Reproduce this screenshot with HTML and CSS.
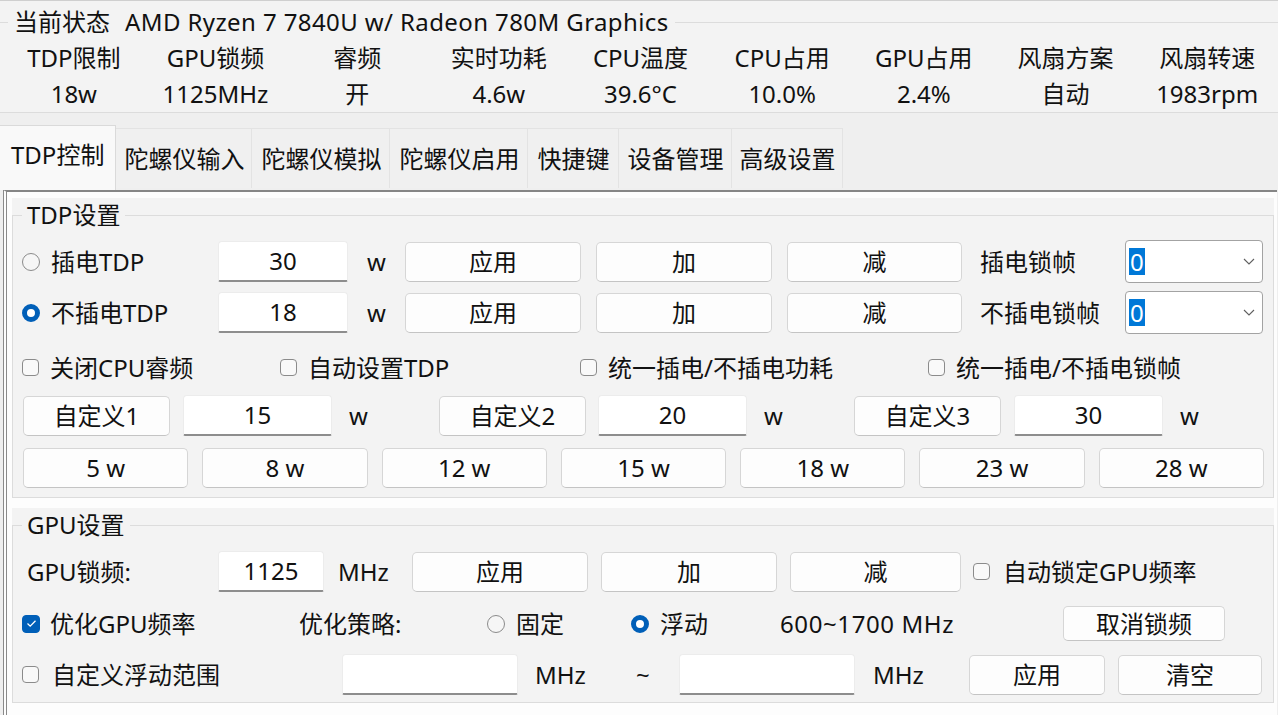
FILE: index.html
```html
<!DOCTYPE html>
<html lang="zh-CN">
<head>
<meta charset="utf-8">
<title>TDP控制</title>
<link rel="stylesheet" href="styles.css">
</head>
<body>
<header class="status">
  <fieldset class="status-box">
    <legend class="status-title">当前状态<span class="cpu-name">AMD Ryzen 7 7840U w/ Radeon 780M Graphics</span></legend>
    <div class="stats">
      <div class="stat"><div class="stat-line">TDP限制</div><div class="stat-line">18w</div></div>
      <div class="stat"><div class="stat-line">GPU锁频</div><div class="stat-line">1125MHz</div></div>
      <div class="stat"><div class="stat-line">睿频</div><div class="stat-line">开</div></div>
      <div class="stat"><div class="stat-line">实时功耗</div><div class="stat-line">4.6w</div></div>
      <div class="stat"><div class="stat-line">CPU温度</div><div class="stat-line">39.6°C</div></div>
      <div class="stat"><div class="stat-line">CPU占用</div><div class="stat-line">10.0%</div></div>
      <div class="stat"><div class="stat-line">GPU占用</div><div class="stat-line">2.4%</div></div>
      <div class="stat"><div class="stat-line">风扇方案</div><div class="stat-line">自动</div></div>
      <div class="stat"><div class="stat-line">风扇转速</div><div class="stat-line">1983rpm</div></div>
    </div>
  </fieldset>
</header>

<nav class="tabs">
  <div class="tab tab-active">TDP控制</div>
  <div class="tab">陀螺仪输入</div>
  <div class="tab tab-wide">陀螺仪模拟</div>
  <div class="tab tab-wide">陀螺仪启用</div>
  <div class="tab tab-short">快捷键</div>
  <div class="tab tab-dev">设备管理</div>
  <div class="tab tab-adv">高级设置</div>
</nav>

<main class="panel">
  <section class="group group-tdp">
    <fieldset class="group-box">
      <legend class="group-title">TDP设置</legend>

      <div class="row row-t1">
        <div class="opt opt-radio cell-196"><span class="radio"></span><span>插电TDP</span></div>
        <div class="field field-130">30</div>
        <div class="unit unit-57">w</div>
        <div class="btn btn-176">应用</div>
        <div class="btn btn-176 gap-15">加</div>
        <div class="btn btn-175 gap-15">减</div>
        <div class="cell cell-fps">插电锁帧</div>
        <div class="combo"><span class="combo-sel">0</span><svg class="chev" width="12" height="7" viewBox="0 0 12 7"><polyline points="1,1 6,6 11,1" fill="none" stroke="#5f5f5f" stroke-width="1.1"/></svg></div>
      </div>

      <div class="row row-t2">
        <div class="opt opt-radio cell-196"><span class="radio radio-on"></span><span>不插电TDP</span></div>
        <div class="field field-130">18</div>
        <div class="unit unit-57">w</div>
        <div class="btn btn-176">应用</div>
        <div class="btn btn-176 gap-15">加</div>
        <div class="btn btn-175 gap-15">减</div>
        <div class="cell cell-fps">不插电锁帧</div>
        <div class="combo"><span class="combo-sel">0</span><svg class="chev" width="12" height="7" viewBox="0 0 12 7"><polyline points="1,1 6,6 11,1" fill="none" stroke="#5f5f5f" stroke-width="1.1"/></svg></div>
      </div>

      <div class="row row-t3">
        <div class="opt cell-258"><span class="check"></span><span>关闭CPU睿频</span></div>
        <div class="opt cell-300"><span class="check"></span><span>自动设置TDP</span></div>
        <div class="opt cell-348"><span class="check"></span><span>统一插电/不插电功耗</span></div>
        <div class="opt"><span class="check"></span><span>统一插电/不插电锁帧</span></div>
      </div>

      <div class="row row-t4">
        <div class="btn btn-147">自定义1</div>
        <div class="field field-149 gap-13">15</div>
        <div class="unit unit-107">w</div>
        <div class="btn btn-147">自定义2</div>
        <div class="field field-149 gap-12">20</div>
        <div class="unit unit-107">w</div>
        <div class="btn btn-147">自定义3</div>
        <div class="field field-149 gap-13">30</div>
        <div class="unit unit-107">w</div>
      </div>

      <div class="row row-t5">
        <div class="btn btn-flex">5 w</div>
        <div class="btn btn-flex">8 w</div>
        <div class="btn btn-flex">12 w</div>
        <div class="btn btn-flex">15 w</div>
        <div class="btn btn-flex">18 w</div>
        <div class="btn btn-flex">23 w</div>
        <div class="btn btn-flex">28 w</div>
      </div>
    </fieldset>
  </section>

  <section class="group group-gpu">
    <fieldset class="group-box">
      <legend class="group-title">GPU设置</legend>

      <div class="row row-g1">
        <div class="cell cell-196 cell-gpu">GPU锁频:</div>
        <div class="field field-106">1125</div>
        <div class="unit unit-88">MHz</div>
        <div class="btn btn-176">应用</div>
        <div class="btn btn-176 gap-13">加</div>
        <div class="btn btn-171 gap-13">减</div>
        <div class="opt opt-wide gap-12"><span class="check"></span><span>自动锁定GPU频率</span></div>
      </div>

      <div class="row row-g2">
        <div class="opt opt-tight cell-277"><span class="check check-on"><svg width="11" height="9" viewBox="0 0 11 9"><polyline points="1.5,4.5 4.2,7.2 9.5,1.8" fill="none" stroke="#fff" stroke-width="1.3"/></svg></span><span>优化GPU频率</span></div>
        <div class="cell cell-188">优化策略:</div>
        <div class="opt opt-radio cell-144"><span class="radio"></span><span>固定</span></div>
        <div class="opt opt-radio cell-149"><span class="radio radio-on"></span><span>浮动</span></div>
        <div class="cell cell-283 range">600~1700 MHz</div>
        <div class="btn btn-162">取消锁频</div>
      </div>

      <div class="row row-g3">
        <div class="opt opt-wide cell-320"><span class="check"></span><span>自定义浮动范围</span></div>
        <div class="field field-176"></div>
        <div class="unit unit-118">MHz</div>
        <div class="cell cell-43">~</div>
        <div class="field field-176"></div>
        <div class="unit unit-114">MHz</div>
        <div class="btn btn-136">应用</div>
        <div class="btn btn-144 gap-13">清空</div>
      </div>
    </fieldset>
  </section>
</main>
</body>
</html>
```

FILE: styles.css
```css
* { box-sizing: border-box; }

html, body { margin: 0; padding: 0; }

body {
  width: 1278px;
  height: 715px;
  overflow: hidden;
  background: #efefef;
  font-family: "Noto Sans", "Noto Sans CJK SC", sans-serif;
  font-size: 24px;
  line-height: 1.3;
  color: #111;
}

/* ---------- status header ---------- */
.status {
  height: 113px;
  border-top: 1px solid #cfcfcf;
  background: #f3f3f3;
  padding-top: 6px;
}

.status-box {
  margin: 0 -1px;
  padding: 0;
  min-width: 0;
  height: 106px;
  border: 1px solid #dcdcdc;
}

.status-title {
  margin-left: 8px;
  padding: 0 6px;
  line-height: 30px;
  white-space: nowrap;
}

.cpu-name { margin-left: 15px; letter-spacing: 0.4px; }

.stats {
  display: grid;
  grid-template-columns: repeat(9, 1fr);
  padding: 3px 0 0 3px;
}

.stat { display: flex; flex-direction: column; align-items: center; }

.stat-line { line-height: 36px; white-space: nowrap; }

/* ---------- tabs ---------- */
.tabs {
  display: flex;
  align-items: flex-start;
  height: 77px;
}

.tab {
  margin-top: 15px;
  height: 60px;
  padding: 0 7px 0 8px;
  display: flex;
  align-items: center;
  background: #f0f0f0;
  border: 1px solid #e3e3e3;
  border-bottom: none;
  border-left: none;
  white-space: nowrap;
}

.tab-wide { padding: 0 8px 0 9px; }
.tab-short { padding: 0 9px; }
.tab-dev { padding: 0 8px; }
.tab-adv { padding: 0 7px; }

.tab-active {
  margin-top: 12px;
  height: 65px;
  padding: 0 11px 6px;
  background: #f9f9f9;
  border: 1px solid #dadada;
  border-bottom: none;
  border-left: none;
}

/* ---------- panel ---------- */
.panel {
  margin: 0 1px 0 3px;
  height: 525px;
  background: #fdfdfd;
  border-left: 4px double #8a8a8a;
  border-top: 2px solid #868686;
  padding: 6px 3px 0 5px;
}

.group { background: #f3f3f3; }
.group-tdp { height: 300px; }
.group-gpu { height: 195px; margin-top: 10px; }

.group-box {
  margin: 0;
  min-width: 0;
  height: 100%;
  padding: 0 9px;
  border: 1px solid #dcdcdc;
}

.group-title {
  margin-left: 0;
  padding: 0 5px;
  line-height: 34px;
}

/* ---------- rows ---------- */
.row {
  display: flex;
  align-items: center;
  height: 43px;
  white-space: nowrap;
}

.row-t1 { margin-top: 8px; }
.row-t2 { margin-top: 8px; }
.row-t3 { margin-top: 12px; }
.row-t4 { margin-top: 5px; padding-left: 1px; }
.row-t5 { margin-top: 9px; padding-left: 1px; gap: 14px; }
.row-g1 { margin-top: 8px; }
.row-g2 { margin-top: 9px; }
.row-g3 { margin-top: 8px; }

.row > * { flex-shrink: 0; }

/* ---------- cells ---------- */
.cell, .unit { display: flex; align-items: center; height: 100%; }

.cell-196 { width: 196px; }
.cell-gpu { padding-left: 5px; }
.cell-fps { width: 145px; margin-left: 18px; }
.cell-258 { width: 258px; }
.cell-300 { width: 300px; }
.cell-348 { width: 348px; }
.cell-277 { width: 277px; }
.cell-188 { width: 188px; }
.cell-144 { width: 144px; }
.cell-149 { width: 149px; }
.cell-283 { width: 283px; }
.cell-320 { width: 320px; }
.cell-43 { width: 43px; }

.range { letter-spacing: 0.6px; }

.unit-57 { width: 57px; justify-content: center; }
.unit-107 { width: 107px; padding-left: 17px; }
.unit-88 { width: 88px; padding-left: 14px; }
.unit-118 { width: 118px; padding-left: 17px; }
.unit-114 { width: 114px; padding-left: 18px; }

.gap-12 { margin-left: 12px; }
.gap-13 { margin-left: 13px; }
.gap-15 { margin-left: 15px; }

/* ---------- buttons ---------- */
.btn {
  height: 40px;
  display: flex;
  align-items: center;
  justify-content: center;
  background: #fdfdfd;
  border: 1px solid #d6d6d6;
  border-bottom-color: #c4c4c4;
  border-radius: 5px;
}

.btn-176 { width: 176px; }
.btn-175 { width: 175px; }
.btn-171 { width: 171px; }
.btn-147 { width: 147px; }
.btn-162 { width: 162px; height: 35px; }
.btn-136 { width: 136px; }
.btn-144 { width: 144px; }
.btn-flex { flex: 1 1 0; }

/* ---------- text fields ---------- */
.field {
  height: 41px;
  display: flex;
  align-items: center;
  justify-content: center;
  background: #fff;
  border: 1px solid #ececec;
  border-bottom: 2px solid #8d8d8d;
  border-radius: 4px 4px 2px 2px;
}

.field-130 { width: 130px; }
.field-149 { width: 149px; }
.field-106 { width: 106px; }
.field-176 { width: 176px; }

/* ---------- combo box ---------- */
.combo {
  width: 138px;
  height: 43px;
  display: flex;
  align-items: center;
  padding: 0 7px 0 3px;
  background: #fff;
  border: 1px solid #a3a3a3;
  border-radius: 4px;
}

.combo-sel {
  background: #0078d7;
  color: #fff;
  line-height: 27px;
  padding: 0 1px;
}

.chev { margin-left: auto; }

/* ---------- radio / checkbox ---------- */
.opt { display: flex; align-items: center; gap: 11px; height: 100%; }
.opt-radio { gap: 11px; }
.opt-tight { gap: 10px; }
.opt-wide { gap: 13px; }

.radio {
  width: 18px;
  height: 18px;
  border-radius: 50%;
  border: 1px solid #8b8b8b;
  background: #f6f6f6;
  flex-shrink: 0;
}

.radio-on {
  border: 5px solid #005fb8;
  background: #fff;
}

.check {
  width: 17px;
  height: 17px;
  border-radius: 4px;
  border: 1px solid #8b8b8b;
  background: #f9f9f9;
  flex-shrink: 0;
  display: flex;
  align-items: center;
  justify-content: center;
}

.check-on {
  width: 18px;
  height: 18px;
  background: #005fb8;
  border-color: #005fb8;
}
```
